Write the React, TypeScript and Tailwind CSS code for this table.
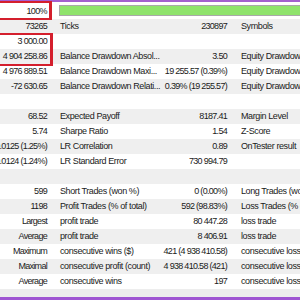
type Row = [string, string, string, string]

const ROWS: Row[] = [
  ['73265', 'Ticks', '230897', 'Symbols'],
  ['3 000.00', '', '', ''],
  ['4 904 258.86', 'Balance Drawdown Absol...', '3.50', 'Equity Drawdown Absolute'],
  ['4 976 889.51', 'Balance Drawdown Maxi...', '19 255.57 (0.39%)', 'Equity Drawdown Maximal'],
  ['-72 630.65', 'Balance Drawdown Relati...', '0.39% (19 255.57)', 'Equity Drawdown Relative'],
  ['', '', '', ''],
  ['68.52', 'Expected Payoff', '8187.41', 'Margin Level'],
  ['5.74', 'Sharpe Ratio', '1.54', 'Z-Score'],
  ['0.0125 (1.25%)', 'LR Correlation', '0.89', 'OnTester result'],
  ['0.0124 (1.24%)', 'LR Standard Error', '730 994.79', ''],
  ['', '', '', ''],
  ['599', 'Short Trades (won %)', '0 (0.00%)', 'Long Trades (won %)'],
  ['1198', 'Profit Trades (% of total)', '592 (98.83%)', 'Loss Trades (% of total)'],
  ['Largest', 'profit trade', '80 447.28', 'loss trade'],
  ['Average', 'profit trade', '8 406.91', 'loss trade'],
  ['Maximum', 'consecutive wins ($)', '421 (4 938 410.58)', 'consecutive losses ($)'],
  ['Maximal', 'consecutive profit (count)', '4 938 410.58 (421)', 'consecutive loss (count)'],
  ['Average', 'consecutive wins', '197', 'consecutive losses'],
]

export default function App(): JSX.Element {
  return (
    <div className="relative w-[300px] h-[300px] overflow-hidden bg-white flex flex-col font-['Liberation_Sans',Arial,sans-serif] text-[9px] tracking-[-0.4px] text-[#1a1a1a] leading-none">
      <div className="h-[2px] bg-[#a35fd0] shrink-0" />
      <div className="h-[2px] shrink-0" />

      {/* progress row */}
      <div className="h-[15px] shrink-0 grid grid-cols-[52px_1fr] bg-white">
        <div className="flex items-center justify-end pr-[5px] whitespace-nowrap tracking-[-0.6px]">100%</div>
        <div className="flex items-start pt-[1px] pl-[7px]">
          <div className="h-[11px] w-[260px] shrink-0 bg-[#8fe36c] border border-[#a9a9a9]" />
        </div>
      </div>

      {ROWS.map((r, i) => (
        <StatRow key={i} row={r} shaded={i % 2 === 0} />
      ))}

      <div className="flex-1 bg-[#ededed]" />
      <div className="h-[3px] bg-[#9f55d2] shrink-0" />

      {/* highlight boxes */}
      <div className="absolute left-[-3px] top-[1px] w-[55px] h-[19px] border-y-2 border-r-[3px] border-[#d41f2d]" />
      <div className="absolute left-[-3px] top-[33px] w-[56px] h-[33px] border-y-2 border-r-[3px] border-[#d41f2d]" />
    </div>
  )
}

function StatRow({ row, shaded }: { row: Row; shaded: boolean }): JSX.Element {
  const [a, b, c, d] = row
  return (
    <div
      className={
        shaded
          ? 'h-[15px] shrink-0 grid grid-cols-[52px_108px_72px_1fr] bg-[#efefef]'
          : 'h-[15px] shrink-0 grid grid-cols-[52px_108px_72px_1fr] bg-white'
      }
    >
      <div className="flex items-center justify-end pr-[5px] whitespace-nowrap tracking-[-0.7px]">{a}</div>
      <div className="flex items-center pl-[8px] whitespace-nowrap">{b}</div>
      <div className="flex items-center justify-end pr-[5px] whitespace-nowrap tracking-[-0.7px]">{c}</div>
      <div className="flex items-center pl-[9px] whitespace-nowrap overflow-hidden">{d}</div>
    </div>
  )
}
